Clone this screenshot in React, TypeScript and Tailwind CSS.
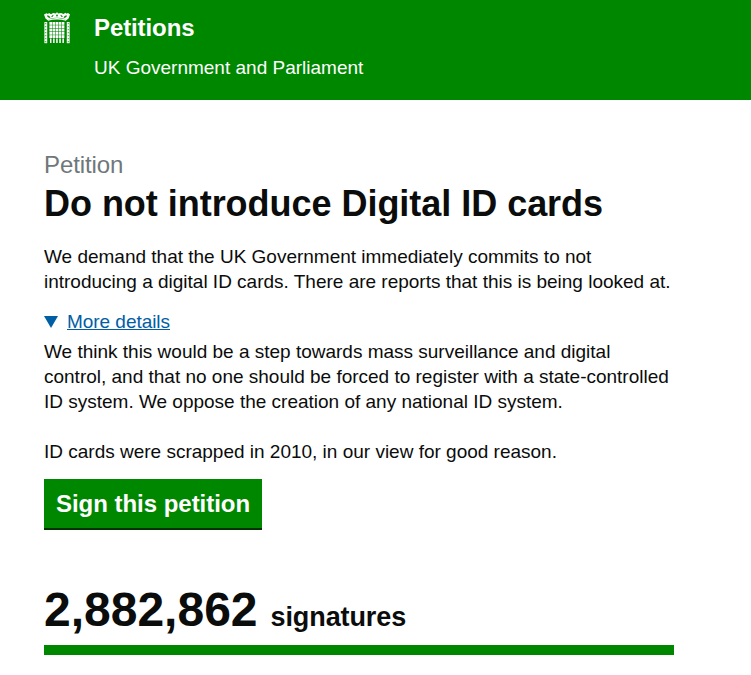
import React from "react";

function Crest() {
  const links = [0, 1, 2, 3, 4, 5, 6];
  const cols = [5.4, 8.5, 11.6, 14.7, 17.8];
  const rows = [10, 13.300, 16.600, 19.900, 23.200];
  return (
    <svg viewBox="0 0 26 32" className="h-8 w-[26px] shrink-0" fill="#fff" aria-hidden>
      {/* crown */}
      <path d="M13 0l1 1.500 3-.5 2.500 1 2-1.200 1 1 1.500-.8L26 2.500l-1.500 4-2.500 2-1-1.500q-8-2.500-16 0l-1 1.500-2.500-2-1.500-4 2.500-1.300 1.500.8 1-1 2 1.200L9 1l3 .5z" />
      <path d="M4 7.500q9-3 18 0v1.300q-9-2.800-18 0z" />
      <g fill="#008700">
        <path d="M3.500 3.200q2 .2 3 2.400l-1.500.5q-.8-1.600-2-1.900zM22.500 3.200q-2 .2-3 2.400l1.500.5q.8-1.600 2-1.900z" />
        <path d="M9 3q-1.500.4-1.800 2l1.500-.2q.3-.8 1-1zM17 3q1.500.4 1.800 2l-1.500-.2q-.3-.8-1-1z" />
        <circle cx="13" cy="3.500" r="0.900" />
      </g>
      {/* portcullis */}
      {cols.map((x) =>
        rows.map((y) => <rect key={`${x}-${y}`} x={x} y={y} width="2.600" height="2.800" />)
      )}
      <path d="M6 26.400h1.500V31H6zM9.100 26.400h1.500V31H9.100zM12.200 26.400h1.500V31h-1.500zM15.300 26.400h1.500V31h-1.500zM18.400 26.400h1.500V31h-1.500z" />
      {/* chains */}
      {links.map((i) => (
        <g key={i} fill="none" stroke="#fff" strokeWidth="1">
          <rect x="0.900" y={10.500 + i * 3} width="1.800" height="2.200" />
          <rect x="23.300" y={10.500 + i * 3} width="1.800" height="2.200" />
        </g>
      ))}
    </svg>
  );
}

export default function App() {
  return (
    <div className="min-h-[675px] overflow-hidden bg-white font-['Liberation_Sans',Arial,sans-serif] text-[#0b0c0c]">
      {/* Header */}
      <header className="flex h-[100px] items-start bg-[#008700] pt-3 pl-11 text-white">
        <Crest />
        <div className="ml-6">
          <div className="text-2xl leading-[32px] font-bold tracking-[-0.1px]">Petitions</div>
          <div className="mt-[11px] text-[19px] leading-[25px]">UK Government and Parliament</div>
        </div>
      </header>

      <main className="px-11 pt-[51px]">
        <div className="text-2xl leading-7 tracking-[-0.1px] text-[#6f777b]">Petition</div>
        <h1 className="mt-[5px] text-4xl leading-[40px] font-bold tracking-[-0.03px]">Do not introduce Digital ID cards</h1>

        <p className="mt-[20px] text-[19px] leading-[25px] tracking-[-0.006px]">
          We demand that the UK Government immediately commits to not
          <br />
          introducing a digital ID cards. There are reports that this is being looked at.
        </p>

        <div className="mt-[15px] flex items-center text-[19px] leading-[25px]">
          <span className="mr-[9px] h-0 w-0 border-x-[7px] border-t-[12px] border-x-transparent border-t-[#005ea5]" />
          <a href="#" className="text-[#005ea5] tracking-[-0.04px] underline">
            More details
          </a>
        </div>

        <p className="mt-[5px] text-[19px] leading-[25px] tracking-[-0.006px]">
          We think this would be a step towards mass surveillance and digital
          <br />
          control, and that no one should be forced to register with a state-controlled
          <br />
          ID system. We oppose the creation of any national ID system.
          <br />
          <br />
          ID cards were scrapped in 2010, in our view for good reason.
        </p>

        <a
          href="#"
          className="mt-[15px] inline-block w-[218px] bg-[#008700] py-2 pl-3 text-2xl leading-[33px] font-bold tracking-[-0.03px] text-white shadow-[0_2px_0_#003300]"
        >
          Sign this petition
        </a>

        <div className="mt-[52px] flex items-baseline gap-[13px]">
          <span className="text-5xl leading-[60px] font-bold">2,882,862</span>
          <span className="text-[27px] leading-8 font-bold tracking-[-0.1px]">signatures</span>
        </div>
        <div className="mt-[5px] h-2.5 w-[630px] bg-[#008700]" />
      </main>
    </div>
  );
}
